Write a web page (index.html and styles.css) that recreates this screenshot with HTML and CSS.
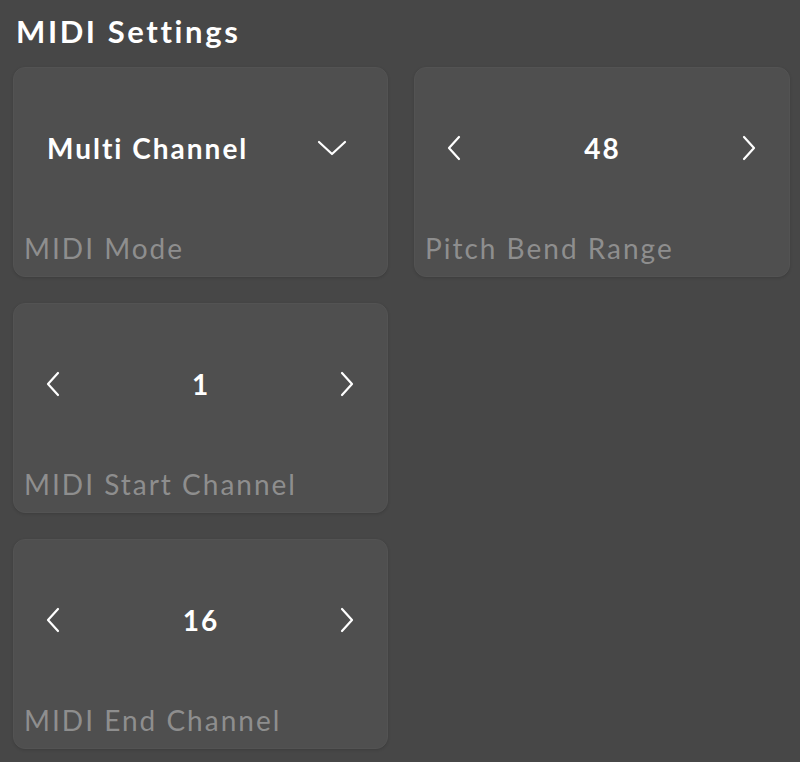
FILE: index.html
```html
<!DOCTYPE html>
<html lang="en">
<head>
<meta charset="UTF-8">
<title>MIDI Settings</title>
<link rel="stylesheet" href="styles.css">
</head>
<body>
  <h1 class="title">MIDI Settings</h1>
  <div class="grid">
    <div class="card">
      <div class="control select">
        <span class="value">Multi Channel</span>
        <svg class="chev-down" width="30" height="16" viewBox="0 0 30 16"><path d="M2 2 L15 14 L28 2" /></svg>
      </div>
      <div class="label">MIDI Mode</div>
    </div>
    <div class="card">
      <div class="control stepper">
        <svg class="arrow" width="16" height="26" viewBox="0 0 16 26"><path d="M13 2 L3 13 L13 24" /></svg>
        <span class="value">48</span>
        <svg class="arrow" width="16" height="26" viewBox="0 0 16 26"><path d="M3 2 L13 13 L3 24" /></svg>
      </div>
      <div class="label">Pitch Bend Range</div>
    </div>
    <div class="card">
      <div class="control stepper">
        <svg class="arrow" width="16" height="26" viewBox="0 0 16 26"><path d="M13 2 L3 13 L13 24" /></svg>
        <span class="value">1</span>
        <svg class="arrow" width="16" height="26" viewBox="0 0 16 26"><path d="M3 2 L13 13 L3 24" /></svg>
      </div>
      <div class="label">MIDI Start Channel</div>
    </div>
    <div></div>
    <div class="card">
      <div class="control stepper">
        <svg class="arrow" width="16" height="26" viewBox="0 0 16 26"><path d="M13 2 L3 13 L13 24" /></svg>
        <span class="value">16</span>
        <svg class="arrow" width="16" height="26" viewBox="0 0 16 26"><path d="M3 2 L13 13 L3 24" /></svg>
      </div>
      <div class="label">MIDI End Channel</div>
    </div>
  </div>
</body>
</html>
```

FILE: styles.css
```css
body {
  margin: 0;
  background: #474747;
  color: #fff;
  font-family: "Lato", "DejaVu Sans", sans-serif;
  height: 762px;
  overflow: hidden;
}

.title {
  margin: 0;
  padding: 12px 0 0 16px;
  height: 55px;
  box-sizing: border-box;
  font-size: 31px;
  font-weight: 700;
  letter-spacing: 2.6px;
}

.grid {
  display: grid;
  grid-template-columns: 375px 376px;
  grid-auto-rows: 210px;
  column-gap: 26px;
  row-gap: 26px;
  padding: 12px 0 0 13px;
}

.card {
  background: #4f4f4f;
  border: 1px solid #535353;
  border-radius: 12px;
  box-shadow: 0 1px 3px rgba(0, 0, 0, 0.15);
  display: flex;
  flex-direction: column;
  box-sizing: border-box;
}

.control {
  height: 160px;
  display: flex;
  align-items: center;
}

.select {
  justify-content: space-between;
  padding: 0 40px 0 33px;
}

.stepper {
  justify-content: space-between;
  padding: 0 32px 0 31px;
}

.value {
  font-size: 28px;
  font-weight: 700;
  letter-spacing: 2px;
}

.stepper .value {
  margin-right: -2px;
}

.control svg path {
  fill: none;
  stroke: #fff;
  stroke-width: 2.2;
  stroke-linecap: round;
  stroke-linejoin: round;
}

.label {
  padding-left: 10px;
  font-size: 28px;
  color: #8e8e8e;
  letter-spacing: 2px;
  line-height: 40px;
}
```
